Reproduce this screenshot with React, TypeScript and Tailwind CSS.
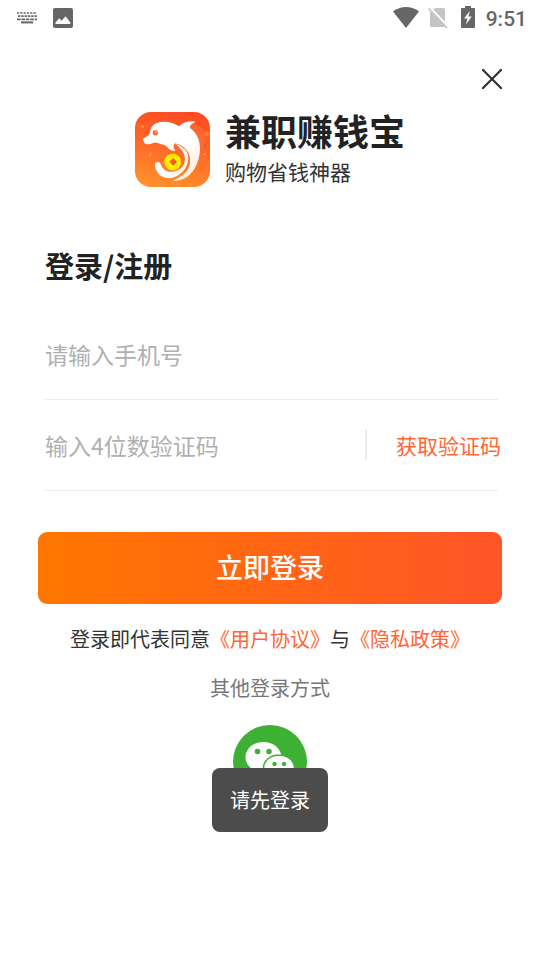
import type { FormEvent } from "react";

function StatusBar() {
  return (
    <div className="flex h-9 items-center justify-between pl-4 pr-[13px] text-[#666666]">
      <div className="flex items-center gap-4">
        <svg className="h-3 w-[21px]" viewBox="0 0 21 12" fill="none" stroke="currentColor" aria-hidden="true">
          <path d="M1 1h20" strokeWidth="1.6" strokeDasharray="2.2 1.1" />
          <path d="M2 4.2h19" strokeWidth="1.8" strokeDasharray="2.4 0.9" />
          <path d="M1 7.4h20" strokeWidth="1.6" strokeDasharray="3.6 0.8" />
          <path d="M5 10.4h12" strokeWidth="2" />
        </svg>
        <svg className="size-5" viewBox="0 0 20 20" aria-hidden="true">
          <rect width="20" height="20" rx="2" fill="currentColor" />
          <path d="M2.500 16v-1.500l3.700-4.300 2.400 2.600 4-4.600 4.700 6.300V16z" fill="#fff" />
        </svg>
      </div>
      <div className="flex items-center">
        <svg className="h-[22px] w-[26px]" viewBox="0 0 26 22" fill="currentColor" aria-hidden="true">
          <path d="M0 4.500C7-1.500 19-1.500 26 4.500L13 21z" />
        </svg>
        <svg className="ml-[9px] h-[22px] w-5" viewBox="0 0 20 22" aria-hidden="true">
          <path d="M7 1H15.500q1.500 0 1.500 1.500v16q0 1.500-1.500 1.500h-12Q2 20 2 18.500V6z" fill="#c4c4c4" />
          <path d="M1.500 0l18.500 19.500" stroke="#fff" strokeWidth="2" />
          <path d="M.500 1.500l18.500 19.500" stroke="#c4c4c4" strokeWidth="1.800" />
        </svg>
        <svg className="mb-0.5 ml-[13px] h-[22px] w-[14px]" viewBox="0 0 14 22" aria-hidden="true">
          <path d="M4 0h6v2h3q1 0 1 1v18q0 1-1 1H1q-1 0-1-1V3q0-1 1-1h3z" fill="currentColor" />
          <path d="M8.800 5L3 12.500h3.300L5 18.500l5.700-8H7.500z" fill="#fff" />
        </svg>
        <time className="ml-[11px] pt-0.5 font-['Roboto',sans-serif] text-[21px] font-medium leading-6">9:51</time>
      </div>
    </div>
  );
}

function DolphinLogo() {
  return (
    <svg className="size-[75px] shrink-0 rounded-2xl" viewBox="30 36 225 225" role="img" aria-label="兼职赚钱宝">
      <defs>
        <linearGradient id="logo-bg" x1="0.6" y1="0" x2="0.4" y2="1">
          <stop offset="0" stopColor="#fe4b22" />
          <stop offset="0.5" stopColor="#ff6a2a" />
          <stop offset="1" stopColor="#ff9029" />
        </linearGradient>
        <linearGradient id="logo-body" x1="0" y1="0" x2="1" y2="1">
          <stop offset="0.6" stopColor="#fff" />
          <stop offset="1" stopColor="#ffe5cf" />
        </linearGradient>
      </defs>
      <rect x="30" y="36" width="225" height="225" fill="url(#logo-bg)" />
      <circle cx="200" cy="115" r="42" fill="#ff8140" opacity="0.35" />
      <path
        d="M54 121Q53 115 62 112Q73 107 75 98C76 77 91 66 113 65Q143 64 162 79Q177 63 207 64Q212 65 207 69Q193 74 195 84C219 101 228 128 224 160C218 208 189 243 146 243Q143 241 147 240C177 229 198 205 195 176C192 153 178 137 150 130L147 134Q144 142 151 153Q134 152 126 140Q118 132 106 132Q96 126 86 128Q71 136 58 130Q55 127 58 124Q54 124 54 121Z"
        fill="url(#logo-body)"
      />
      <path
        d="M151 132Q174 139 184 154C194 170 190 190 181 205C164 232 131 243 107 227Q94 218 90 198Q88 188 97 186Q105 184 108 194Q113 211 131 215C157 219 179 202 180 178Q180 152 151 132Z"
        fill="url(#logo-body)"
      />
      <circle cx="143" cy="186" r="25" fill="#fff000" />
      <circle cx="143" cy="186" r="20" fill="none" stroke="#ffdf00" strokeWidth="2" />
      <path d="M145 174l11 11-11 12-12-12z" fill="#f45616" />
      <path d="M145 179v13M139 185h12" stroke="#d87522" strokeWidth="2" />
      <circle cx="91" cy="98" r="8" fill="#ff6638" />
      <circle cx="93" cy="96" r="2.500" fill="#fff" />
      <path d="M45 76l13 2-3 6-7-2zM72 160l9-5-3 14-7 3z" fill="#ff9a2e" />
      <path d="M239 132l4 5-3 4-4-5z" fill="#a96b50" />
      <path d="M233 163l8-5v7z" fill="#ffa640" />
      <circle cx="247" cy="101" r="7" fill="#ff993e" opacity="0.6" />
    </svg>
  );
}

function WeChatIcon() {
  return (
    <svg className="size-[74px]" viewBox="0 0 74 74" aria-hidden="true">
      <circle cx="37" cy="37" r="37" fill="#3eb135" />
      <path
        d="M30.500 17C20.500 17 12.500 23.800 12.500 32.200c0 4.800 2.600 9 6.700 11.800L17.500 49.500l6.300-3.200c2.100.7 4.400 1.100 6.700 1.100 10 0 18-6.800 18-15.200S40.500 17 30.500 17z"
        fill="#fff"
      />
      <path
        d="M46 30c-8.700 0-15.500 5.800-15.500 13s6.800 13 15.500 13c2 0 3.900-.3 5.600-.9l5.400 2.900-1.500-4.800c3.700-2.400 6-6 6-10.200C61.500 35.800 54.700 30 46 30z"
        fill="#fff"
        stroke="#3eb135"
        strokeWidth="1.500"
      />
      <circle cx="24.500" cy="26.500" r="2.800" fill="#3eb135" />
      <circle cx="36" cy="26.500" r="2.800" fill="#3eb135" />
      <circle cx="41.500" cy="39" r="2.200" fill="#3eb135" />
      <circle cx="51" cy="39" r="2.200" fill="#3eb135" />
    </svg>
  );
}

export default function App() {
  const handleSubmit = (event: FormEvent<HTMLFormElement>) => event.preventDefault();

  return (
    <div className="relative min-h-screen bg-white font-['Noto_Sans_CJK_SC',sans-serif] text-[#222222]">
      <StatusBar />
      <main className="px-[38px]">
        <div className="-mr-[9px] flex justify-end pt-6">
          <button type="button" aria-label="关闭" className="flex size-[38px] items-center justify-center">
            <svg className="size-5" viewBox="0 0 20 20" fill="none" stroke="#333333" strokeWidth="2.200" aria-hidden="true">
              <path d="M0 0l20 20M20 0L0 20" />
            </svg>
          </button>
        </div>

        <header className="mt-[14px] flex justify-center gap-[15px]">
          <DolphinLogo />
          <div>
            <h1 className="text-[36px] font-bold leading-9">兼职赚钱宝</h1>
            <p className="mt-1 text-[21px] leading-[38px] text-[#333333]">购物省钱神器</p>
          </div>
        </header>

        <form onSubmit={handleSubmit}>
          <div className="ml-[7px] mr-1">
            <h2 className="mt-[55px] text-[29px] font-bold leading-10">登录/注册</h2>
            <div className="mt-6 flex h-[91px] items-center border-b border-[#ebebeb]">
              <input
                type="tel"
                aria-label="手机号"
                placeholder="请输入手机号"
                className="w-full min-w-0 bg-transparent text-[23px] leading-9 outline-none placeholder:text-[#b0b0b0]"
              />
            </div>
            <div className="flex h-[91px] items-center border-b border-[#ebebeb]">
              <input
                type="text"
                inputMode="numeric"
                maxLength={4}
                aria-label="验证码"
                placeholder="输入4位数验证码"
                className="min-w-0 flex-1 bg-transparent text-[23px] leading-9 outline-none placeholder:text-[#b0b0b0]"
              />
              <span className="h-[30px] w-0.5 bg-[#ebebeb]" />
              <button type="button" className="-mr-[3px] shrink-0 pl-[29px] text-[21px] leading-9 text-[#ff6633]">
                获取验证码
              </button>
            </div>
          </div>
          <button
            type="submit"
            className="mt-[41px] h-[72px] w-full rounded-[9px] bg-linear-to-r/srgb from-[#ff7700] to-[#ff5528] pb-0.5 text-[27px] font-medium text-white"
          >
            立即登录
          </button>
        </form>

        <p className="mt-5 text-center text-[20px] leading-[30px] text-[#333333]">
          登录即代表同意
          <a href="#terms" className="text-[#ff6633]">《用户协议》</a>
          与
          <a href="#privacy" className="text-[#ff6633]">《隐私政策》</a>
        </p>

        <section className="mt-[19px] flex flex-col items-center">
          <h3 className="text-[20px] leading-[30px] text-[#777777]">其他登录方式</h3>
          <button type="button" aria-label="微信登录" className="mt-[22px]">
            <WeChatIcon />
          </button>
        </section>
      </main>

      <div className="pointer-events-none absolute inset-x-0 bottom-32 flex justify-center">
        <div role="status" className="rounded-lg bg-[#4c4c4c] px-[18px] py-[17px] text-[20px] leading-[30px] text-white">
          请先登录
        </div>
      </div>
    </div>
  );
}
